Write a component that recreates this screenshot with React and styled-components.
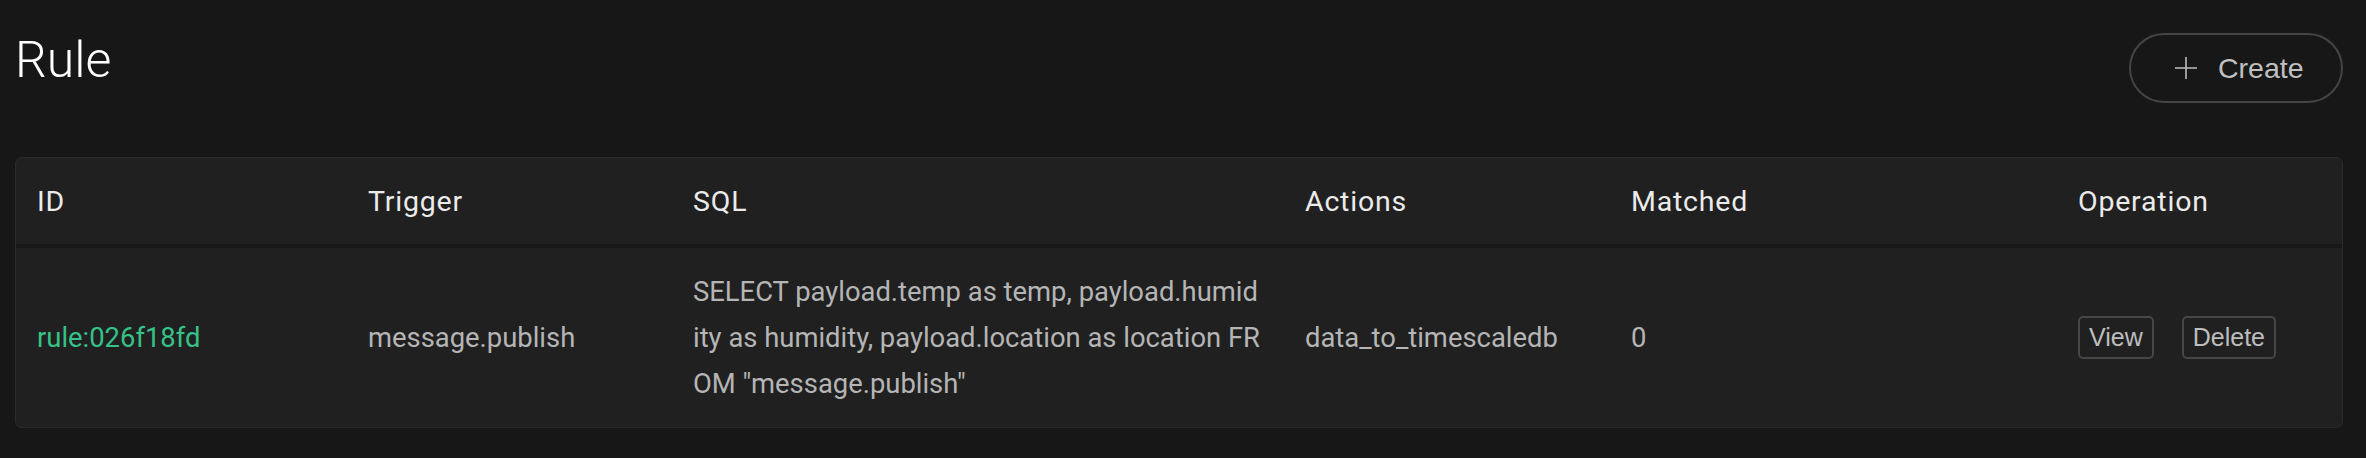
import React from "react";
import styled, { createGlobalStyle } from "styled-components";

const GlobalStyle = createGlobalStyle`
  html, body {
    margin: 0;
    padding: 0;
    background-color: #171717;
  }
  body {
    font-family: Roboto, "Liberation Sans", sans-serif;
  }
`;

const columns = "331px 325px 612px 326px 447px 1fr";

const rules = [
  {
    id: "rule:026f18fd",
    trigger: "message.publish",
    sql: 'SELECT payload.temp as temp, payload.humidity as humidity, payload.location as location FROM "message.publish"',
    actions: "data_to_timescaledb",
    matched: 0,
  },
];

function App() {
  return (
    <Page>
      <GlobalStyle />
      <TopBar>
        <Title>Rule</Title>
        <CreateButton>
          <svg width="24" height="24" viewBox="0 0 24 24">
            <path d="M12 1v22M1 12h22" stroke="#bdbdbd" strokeWidth="1.6" fill="none" />
          </svg>
          Create
        </CreateButton>
      </TopBar>
      <Card>
        <HeadRow>
          <HeadCell>ID</HeadCell>
          <HeadCell>Trigger</HeadCell>
          <HeadCell>SQL</HeadCell>
          <HeadCell>Actions</HeadCell>
          <HeadCell>Matched</HeadCell>
          <HeadCell>Operation</HeadCell>
        </HeadRow>
        {rules.map((rule) => (
          <BodyRow key={rule.id}>
            <Cell color="#36c287">{rule.id}</Cell>
            <Cell>{rule.trigger}</Cell>
            <Cell>
              <SqlText>{rule.sql}</SqlText>
            </Cell>
            <Cell>{rule.actions}</Cell>
            <Cell>{rule.matched}</Cell>
            <Cell>
              <OpGroup>
                <OpButton>View</OpButton>
                <OpButton>Delete</OpButton>
              </OpGroup>
            </Cell>
          </BodyRow>
        ))}
      </Card>
    </Page>
  );
}

const Page = styled.div`
  box-sizing: border-box;
  width: 2366px;
  height: 458px;
  padding: 0 23px 0 15px;
  background-color: #171717;
`;

const TopBar = styled.div`
  display: flex;
  justify-content: space-between;
  align-items: flex-start;
  padding-top: 30px;
`;

const Title = styled.h1`
  margin: 0;
  font-family: Roboto, sans-serif;
  font-weight: 300;
  font-size: 50px;
  line-height: 60px;
  color: #ffffff;
`;

const CreateButton = styled.button`
  box-sizing: border-box;
  display: flex;
  align-items: center;
  gap: 20px;
  width: 214px;
  height: 70px;
  margin-top: 3px;
  padding: 0 0 0 43px;
  background: transparent;
  border: 2px solid #444446;
  border-radius: 35px;
  color: #c0c0c0;
  font-family: "Liberation Sans", Arial, sans-serif;
  font-size: 28.5px;
`;

const Card = styled.div`
  box-sizing: border-box;
  margin-top: 54px;
  height: 271px;
  padding-left: 21px;
  background-color: #202021;
  border: 1px solid #2b2b2c;
  border-radius: 7px;
  overflow: hidden;
`;

const HeadRow = styled.div`
  display: grid;
  grid-template-columns: ${columns};
  height: 86px;
  margin-left: -21px;
  padding-left: 21px;
  align-items: center;
  border-bottom: 4px solid #181818;
`;

const HeadCell = styled.div`
  font-size: 28.5px;
  font-weight: 400;
  letter-spacing: 0.8px;
  color: #ebebeb;
`;

const BodyRow = styled.div`
  display: grid;
  grid-template-columns: ${columns};
  height: 179px;
  align-items: center;
`;

const Cell = styled.div`
  font-size: 27.4px;
  line-height: 46px;
  color: ${(props) => props.color || "#b5b5b5"};
`;

const SqlText = styled.div`
  width: 569.5px;
  word-break: break-all;
`;

const OpGroup = styled.div`
  display: flex;
  gap: 28px;
`;

const OpButton = styled.button`
  box-sizing: border-box;
  height: 43px;
  padding: 0 9px;
  background: transparent;
  border: 2px solid #464648;
  border-radius: 5px;
  color: #bdbdbd;
  font-family: "Liberation Sans", Arial, sans-serif;
  font-size: 25px;
`;

export default App;
